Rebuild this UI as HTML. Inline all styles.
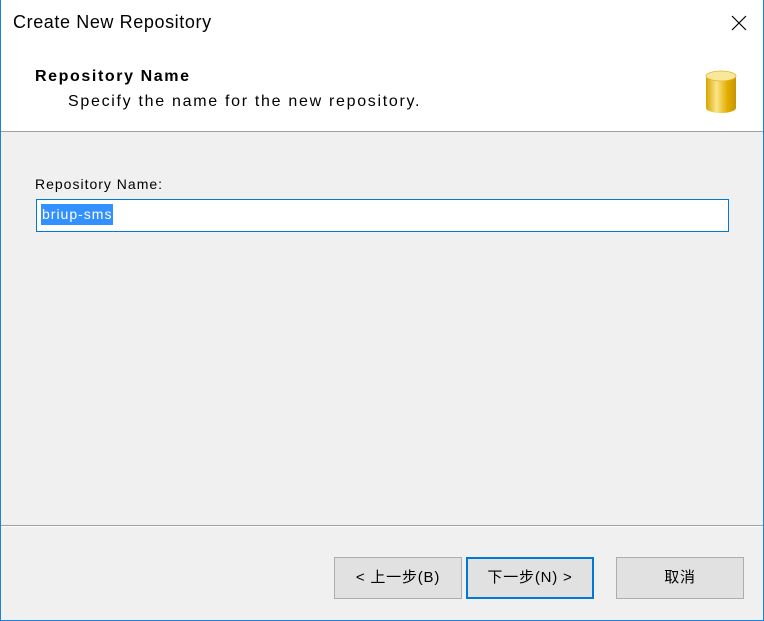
<!DOCTYPE html>
<html><head><meta charset="utf-8"><style>
*{margin:0;padding:0;box-sizing:border-box}
body{width:764px;height:621px;overflow:hidden;font-family:"Liberation Sans","Noto Sans CJK SC",sans-serif;background:#fff;position:relative}
.win{position:absolute;left:0;top:0;width:764px;height:621px;border:1px solid #1883d7;border-top:none;background:#f0f0f0}
.title{position:absolute;left:0;top:0;width:762px;height:46px;background:#fff}
.title span{position:absolute;left:12px;top:12px;font-size:18px;letter-spacing:0.6px;color:#000}
.hdr{position:absolute;left:0;top:46px;width:762px;height:86px;background:#fff;border-bottom:1px solid #a0a0a0}
.b{position:absolute;font-size:13px;color:#000;white-space:nowrap}
.sep{position:absolute;left:0;top:525px;width:762px;height:2px;border-top:1px solid #a0a0a0;border-bottom:1px solid #fff}
.btn{position:absolute;top:557px;width:128px;height:42px;background:#e1e1e1;border:1px solid #adadad;font-size:15px;letter-spacing:0.8px;text-align:center;line-height:40px;color:#000}
</style></head><body>
<div class="win">
<div class="title"><span>Create New Repository</span>
<svg style="position:absolute;left:730px;top:15px" width="16" height="16"><path d="M1 1L15 15M15 1L1 15" stroke="#000" stroke-width="1.2"/></svg></div>
<div class="hdr">
<div class="b" style="left:34px;top:22px;font-size:16px;font-weight:bold;letter-spacing:1.6px">Repository Name</div>
<div class="b" style="left:67px;top:47px;font-size:16px;letter-spacing:1.7px">Specify the name for the new repository.</div>
<svg style="position:absolute;left:704px;top:24px" width="32" height="44" viewBox="0 0 32 44">
<defs><linearGradient id="g" x1="0" x2="1"><stop offset="0" stop-color="#d9a400"/><stop offset=".35" stop-color="#fbe58a"/><stop offset=".7" stop-color="#e2b000"/><stop offset="1" stop-color="#c99400"/></linearGradient></defs>
<path d="M1 6V38A15 5 0 0 0 31 38V6Z" fill="url(#g)"/>
<ellipse cx="16" cy="6" rx="15" ry="5" fill="#fbe79a" stroke="#e0b530" stroke-width="0.8"/>
</svg>
</div>
<div class="b" style="left:34px;top:176px;font-size:14px;letter-spacing:1px">Repository Name:</div>
<div style="position:absolute;left:35px;top:199px;width:693px;height:33px;background:#fff;border:1px solid #0078d7"></div>
<div style="position:absolute;left:40px;top:204px;height:21px;background:#3390ff;color:#fff;font-size:14px;letter-spacing:1px;line-height:20px;padding:0 1px">briup-sms</div>
<div class="sep"></div>
<div class="btn" style="left:333px">&lt; 上一步(B)</div>
<div class="btn" style="left:465px;border:2px solid #0078d7;line-height:38px">下一步(N) &gt;</div>
<div class="btn" style="left:615px">取消</div>
</div>
</body></html>
